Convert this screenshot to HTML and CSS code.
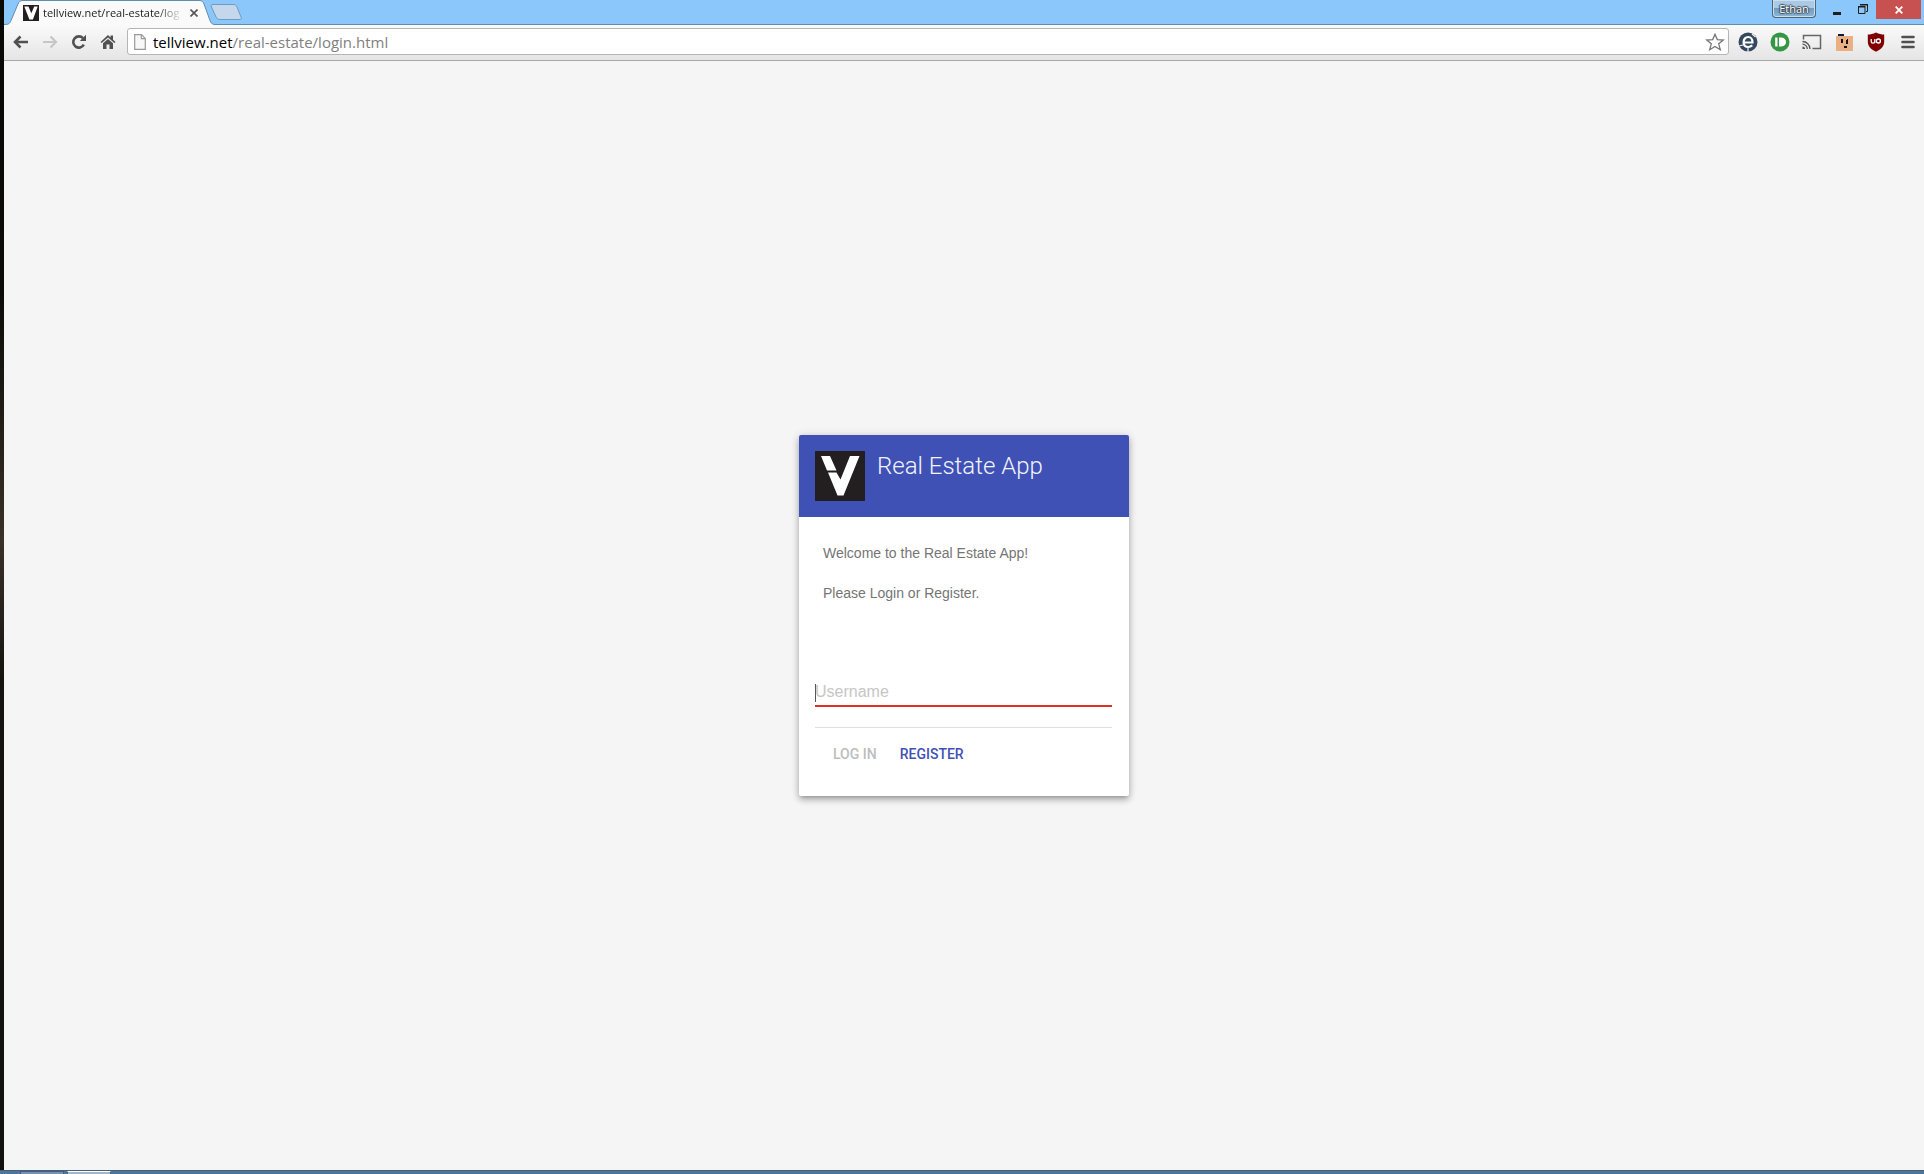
FILE: index.html
```html
<!DOCTYPE html>
<html lang="en">
<head>
<meta charset="utf-8">
<title>Real Estate App</title>
<link rel="stylesheet" href="styles.css">
</head>
<body>
<div class="desktop">
  <div class="browser">
    <header class="tabstrip">
      <div class="tab">
        <svg class="tab-shape" viewBox="0 0 210 25" aria-hidden="true">
          <path d="M0 25V24.500C4 24.500 5 23 6 20.500L13 4C14 1.500 15 .5 18 .5H194C197 .5 198 1.500 199 4L205 20.500C206 23 207 24.500 210 24.500V25Z" fill="#fafafa"/>
          <path d="M0 24.500C4 24.500 5 23 6 20.500L13 4C14 1.500 15 .5 18 .5H194C197 .5 198 1.500 199 4L205 20.500C206 23 207 24.500 210 24.500" fill="none" stroke="#628cad"/>
        </svg>
        <svg class="favicon" viewBox="0 0 50 50" aria-hidden="true"><path fill="#231f20" d="M0 0h50v50H0z"/><path fill="#fff" d="M4 5h13l9 21 9-21h11L31 45H20z"/></svg>
        <span class="tab-title">tellview.net/real-estate/log</span>
        <button class="tab-close" aria-label="Close tab"><svg width="8" height="8" viewBox="0 0 8 8"><path d="M.5.5l7 7M7.500.5l-7 7" stroke="#555" stroke-width="1.600"/></svg></button>
      </div>
      <button class="new-tab" aria-label="New tab"><svg width="34" height="18" viewBox="0 0 34 18"><path d="M3 1.500H23C25 1.500 26 2 27 4L31 14C32 16 31 16.500 29 16.500H11C8 16.500 7 16 6 14L1.500 4C1 2 1 1.500 3 1.500Z" fill="#c5d7eb" stroke="#6d9bc4"/></svg></button>
      <div class="window-controls">
        <button class="profile">Ethan</button>
        <button class="win" aria-label="Minimize"><svg width="10" height="12" viewBox="0 0 10 12"><path d="M1 9h8v3H1z" fill="#1e1e1e"/></svg></button>
        <button class="win" aria-label="Restore"><svg width="10" height="10" viewBox="0 0 10 10"><path d="M.5 3h6.500v6.500H.5zM0 2.500h7.500M2 1h7.500v6.500H8M2 .5h8" fill="none" stroke="#1e1e1e"/></svg></button>
        <button class="win-close" aria-label="Close"><svg width="8" height="8" viewBox="0 0 8 8"><path d="M.7.7l6.600 6.600M7.300.7L.7 7.300" stroke="#fff" stroke-width="1.800"/></svg></button>
      </div>
    </header>
    <nav class="toolbar">
      <button class="tool" aria-label="Back"><svg width="16" height="14" viewBox="0 0 16 14"><path d="M7.500 1.500L2 7l5.500 5.500M2 7h13" fill="none" stroke="#505050" stroke-width="2.600"/></svg></button>
      <button class="tool" aria-label="Forward"><svg width="16" height="14" viewBox="0 0 16 14"><path d="M8.500 1.500L14 7l-5.500 5.500M14 7H1" fill="none" stroke="#c6c6c6" stroke-width="2.200"/></svg></button>
      <button class="tool" aria-label="Reload"><svg width="16" height="16" viewBox="0 0 16 16"><path d="M12.800 10.600A5.600 5.600 0 1 1 12 4.200" fill="none" stroke="#505050" stroke-width="2.600"/><path d="M15 .8V7H8.800z" fill="#505050"/></svg></button>
      <button class="tool" aria-label="Home"><svg width="16" height="16" viewBox="0 0 16 16"><path d="M8 1l2.500 2.400V1.500h2.500v4.300L15.500 8l-1.200 1L8 3.500 1.700 9 .5 8z" fill="#505050"/><path d="M8 5l5 4.300V15H9.500v-4.500h-3V15H3V9.300z" fill="#505050"/></svg></button>
      <div class="omnibox">
        <svg width="12" height="16" viewBox="0 0 12 16" aria-hidden="true"><path d="M.7.7h6.800l3.800 3.800v10.800H.7zM7.300.7v4h4" fill="#f8f8f8" stroke="#999" stroke-width="1.200"/></svg>
        <a class="address" href="#"><span class="host">tellview.net</span>/real-estate/login.html</a>
        <button class="star" aria-label="Bookmark this page"><svg width="20" height="18" viewBox="0 0 20 18"><path d="M10 1.300l2.300 5.300 6 .4-4.600 3.800 1.600 5.900L10 13.500l-5.300 3.200 1.600-5.900L1.700 7l6-.4z" fill="#fff" stroke="#757575" stroke-width="1.300"/></svg></button>
      </div>
      <div class="extensions">
        <button class="ext" aria-label="Extension e"><svg width="20" height="20" viewBox="0 0 20 20"><circle cx="10" cy="10" r="9.500" fill="#34495e"/><path d="M5.500 10.500h9C14.500 7 12.700 5 10.200 5S5.600 7 5.600 10s1.800 5 4.600 5c1.800 0 3-.6 4-1.700" fill="none" stroke="#fff" stroke-width="2.200"/><path d="M10 15v5M14 2l3.500 3M1 14l4-1" stroke="#eee" stroke-width="1.200"/></svg></button>
        <button class="ext" aria-label="Pushbullet"><svg width="20" height="20" viewBox="0 0 20 20"><circle cx="10" cy="10" r="9.500" fill="#359744"/><path d="M5.200 5.500h2.300v9H5.200zM9 5.500h2.500c6 0 6 9 0 9H9z" fill="#fff"/></svg></button>
        <button class="ext" aria-label="Cast"><svg width="20" height="16" viewBox="0 0 20 16"><path d="M1.500 5.500v-4h17v13h-8" fill="none" stroke="#666" stroke-width="1.500"/><path d="M.5 7.500a7.500 7.500 0 0 1 7.500 7.500M.5 10.200A4.800 4.800 0 0 1 5.300 15" fill="none" stroke="#555" stroke-width="1.300"/><path d="M.5 12.500A2.500 2.500 0 0 1 3 15H.5z" fill="#555"/></svg></button>
        <button class="ext" aria-label="Face extension"><svg width="18" height="18" viewBox="0 0 18 18"><path d="M1 3h17v15H1z" fill="#eab083"/><path d="M3 1h6v2H3z" fill="#101a3d"/><path d="M6 6h2v4H6zM11 7h2v4h-2zM12 6h1v1h-1zM9 13h3v2H9z" fill="#111"/></svg></button>
        <button class="ext" aria-label="uBlock"><svg width="18" height="20" viewBox="0 0 18 20"><path d="M9 .5C6 2 3.500 2.500.8 2.500V9c0 5.500 3 8.500 8.200 10.700C14.200 17.500 17.200 14.500 17.200 9V2.500C14.500 2.500 12 2 9 .5z" fill="#800000"/><path d="M4.200 7v2.400c0 2.200 3.600 2.200 3.600 0V7M7.800 7v4" fill="none" stroke="#fff" stroke-width="1.300"/><circle cx="11.400" cy="9" r="2" fill="none" stroke="#fff" stroke-width="1.400"/></svg></button>
        <button class="ext" aria-label="Menu"><svg width="14" height="14" viewBox="0 0 14 14"><path d="M1.500 2h11M1.500 7h11M1.500 12h11" stroke="#505050" stroke-width="2.600" stroke-linecap="round"/></svg></button>
      </div>
    </nav>
    <main class="page">
      <section class="card">
        <header class="card-header">
          <svg class="logo" viewBox="0 0 50 50" role="img" aria-label="Tellview"><path fill="#231f20" d="M0 0h50v50H0z"/><path fill="#fff" d="M6 5h9l6.500 14.500H12zM13 21.500h8.500l4 7L35 5h9.500L28.500 44.500H22.500z"/></svg>
          <h1 class="card-title">Real Estate App</h1>
        </header>
        <div class="intro">
          <p>Welcome to the Real Estate App!</p>
          <p>Please Login or Register.</p>
        </div>
        <form class="login">
          <input class="username" type="text" placeholder="Username" aria-label="Username">
          <div class="actions">
            <button class="action" type="submit" disabled>LOG IN</button>
            <button class="action register" type="button">REGISTER</button>
          </div>
        </form>
      </section>
    </main>
  </div>
  <footer class="taskbar"><span class="task"></span><span class="task task-active"></span></footer>
</div>
</body>
</html>
```
FILE: styles.css
```css
* { box-sizing: border-box; }
body { margin: 0; }
button { padding: 0; border: 0; background: none; display: flex; align-items: center; justify-content: center; }
svg { display: block; flex: none; }

.desktop { min-height: 100vh; display: flex; flex-direction: column; background: linear-gradient(#080806, #0c0b08 25%, #262219 38%, #3a3128 46%, #15130f 58%, #12110e); }
.browser { flex: 1; margin-left: 4px; display: flex; flex-direction: column; }

.tabstrip { height: 25px; display: flex; background: #8bc7fb; border-bottom: 1px solid #628cad; }
.tab { position: relative; width: 208px; height: 25px; padding: 0 10px 0 19px; display: flex; align-items: center; }
.tab-shape { position: absolute; left: 1px; top: 0; width: 210px; height: 25px; }
.favicon { position: relative; width: 16px; height: 16px; }
.tab-title { position: relative; flex: 1; margin-left: 4px; white-space: nowrap; font: 11px/16px "Open Sans", sans-serif; color: #222; -webkit-mask-image: linear-gradient(90deg, #000 114px, transparent 140px); mask-image: linear-gradient(90deg, #000 114px, transparent 140px); }
.tab-close { position: relative; width: 16px; height: 16px; margin-left: 2px; }
.new-tab { width: 34px; height: 25px; padding-bottom: 1px; margin-left: -2px; }
.window-controls { margin-left: auto; margin-right: 3px; display: flex; align-items: flex-start; }
.profile { width: 44px; height: 18px; margin-right: 8px; border: 1px solid #4f6475; border-top: 0; border-radius: 0 0 4px 4px; background: linear-gradient(#a9c9e5 50%, #719cc1 50%, #8db4d4); box-shadow: inset 0 0 0 1px #c7dff2; font: 11px/16px "Open Sans", sans-serif; color: #fff; text-shadow: 1px 0 1px #3c4650, -1px 0 1px #3c4650, 0 1px 1px #3c4650, 0 -1px 1px #3c4650; }
.win { width: 26px; height: 18px; }
.win-close { width: 45px; height: 19px; background: #c75050; }

.toolbar { height: 36px; padding: 0 6px 2px 5px; display: flex; align-items: center; background: linear-gradient(#fafafa, #e5e5e5); border-bottom: 1px solid #a8a8a8; }
.tool { width: 29px; height: 28px; padding-right: 5px; }
.omnibox { flex: 1; height: 27px; margin: 0 9px 0 2px; padding: 0 3px 0 6px; display: flex; align-items: center; background: #fff; border: 1px solid #b5b5b5; border-radius: 3px; }
.address { flex: 1; margin-left: 7px; font: 15px/20px "Open Sans", sans-serif; color: #808080; text-decoration: none; white-space: nowrap; }
.host { color: #000; }
.extensions { display: flex; gap: 12px; }
.ext { width: 20px; height: 24px; }

.page { flex: 1; display: flex; align-items: center; justify-content: center; background: #f5f5f5; }
.card { width: 330px; background: #fff; border-radius: 2px; overflow: hidden; box-shadow: 0 1px 10px rgba(0,0,0,.16), 0 4px 6px rgba(0,0,0,.22), 0 3px 3px -2px rgba(0,0,0,.14); }
.card-header { height: 82px; padding: 16px; display: flex; gap: 12px; background: #3f51b5; }
.logo { width: 50px; height: 50px; }
.card-title { margin: 0; font: 300 24px/30px Roboto, sans-serif; color: #f3f4fb; }
.intro { padding: 24px; color: #757575; font: 14px/24px "Liberation Sans", Arial, sans-serif; }
.intro p { margin: 0 0 16px; }
.intro p:last-child { margin-bottom: 28px; }
.login { padding: 20px 17px 16px 16px; }
.username { display: block; width: 100%; height: 30px; padding: 1px 0 0; border: 0; border-bottom: 2px solid #dd3327; outline: 0; border-radius: 0; background: linear-gradient(#555, #555) 0 7px / 1px 18px no-repeat; font: 16px/26px "Liberation Sans", Arial, sans-serif; }
.username::placeholder { color: #c6c6c6; }
.actions { margin-top: 20px; padding: 8px; display: flex; gap: 3px; border-top: 1px solid #e0e0e0; }
.action { height: 36px; padding: 0 10px; font: 500 14px/36px Roboto, sans-serif; color: #bdbdbd; }
.action.register { color: #3f51b5; }

.taskbar { height: 4px; padding-left: 20px; display: flex; gap: 3px; background: #527595; border-top: 1px solid #41617e; }
.task { width: 44px; height: 3px; background: #7892a9; border: 1px solid #42617d; border-bottom: 0; }
.task-active { background: #a5b8ca; border-top-color: #fff; }
```
